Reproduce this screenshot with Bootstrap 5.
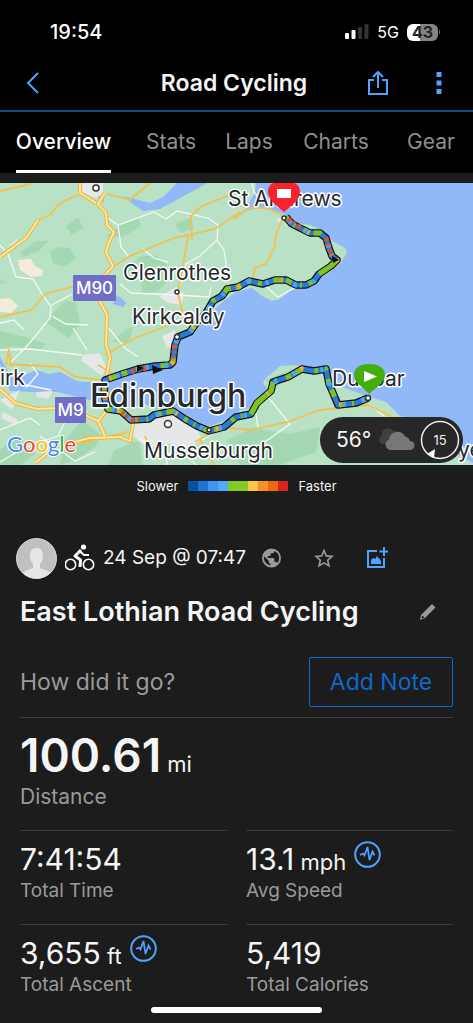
<!DOCTYPE html>
<html lang="en">
<head>
<meta charset="utf-8">
<meta name="viewport" content="width=device-width, initial-scale=1">
<title>Road Cycling</title>
<link href="https://cdn.jsdelivr.net/npm/bootstrap@5.3.0/dist/css/bootstrap.min.css" rel="stylesheet">
<style>
  body { background: #1c1c1c; color: #f5f5f5; font-family: Inter, "Liberation Sans", sans-serif; }
  svg { display: block; flex-shrink: 0; }
  .icon-btn { background: none; border: 0; padding: 0; color: inherit; }
  .muted { color: #9a9a9a; }
  .accent { color: #4da3ff; }
  .topbar { background: #000; }
  .status { height: 56px; padding: 8px 32px 0 50px; font-size: 20px; line-height: 24px; font-weight: 500; color: #fff; }
  .net { font-size: 16px; font-weight: 400; }
  .batt { width: 31px; height: 17px; border-radius: 6px; font-size: 16px; line-height: 17px; font-weight: 700; color: #222; background: linear-gradient(90deg, #fff 43%, #858585 43%); }
  .titlebar { display: grid; grid-template-columns: 1fr auto 1fr; height: 56px; padding: 0 31px 0 26px; border-bottom: 2px solid #0c4d8c; }
  .titlebar h1 { font-size: 23px; line-height: 28px; font-weight: 600; }
  .tabs { display: grid; grid-template-columns: 127fr 88fr 68fr 106fr 84fr; }
  .tabs a { color: #8f8f8f; text-decoration: none; font-size: 21px; line-height: 24px; padding: 18px 0 16px; border-bottom: 3px solid transparent; justify-self: center; white-space: nowrap; }
  .tabs a.active { color: #fff; font-weight: 500; border-color: #fff; }
  .map { margin-top: 10px; }
  .map svg.canvas { width: 100%; height: auto; }
  .weather { right: 10px; bottom: 2px; width: 143px; height: 46px; background: #272727; font-size: 21px; padding: 0 3px 0 16px; }
  .legend { height: 42px; font-size: 13px; line-height: 16px; gap: 10px; }
  .legend i { width: 10px; height: 10px; }
  .meta { height: 42px; margin-top: 30px; padding: 0 16px; }
  .meta time { font-size: 19px; line-height: 24px; margin-right: 16px; }
  .actions { gap: 33px; }
  .gutter { padding: 0 20px; }
  .act-name { font-size: 27px; line-height: 34px; font-weight: 600; }
  .ask { font-size: 23px; line-height: 28px; }
  .note-btn { width: 144px; height: 50px; font-size: 23px; line-height: 28px; color: #1168c9; border: 1px solid #1168c9; border-radius: 2px; padding: 0; }
  .rule { border-top: 1px solid #3f3f3f; margin-top: 10px; }
  .big { font-size: 46px; line-height: 50px; font-weight: 600; }
  .unit { font-size: 22px; line-height: 1; font-weight: 400; }
  .cap-lg { font-size: 21px; line-height: 26px; }
  .stats { display: grid; grid-template-columns: 1fr 1fr; column-gap: 19px; }
  .stat { border-top: 1px solid #3a3a3a; height: 94px; padding-top: 10px; }
  .val { font-size: 30px; line-height: 36px; height: 36px; }
  .cap { font-size: 19px; line-height: 28px; }
  .home { width: 36%; height: 6px; background: #fff; bottom: 10px; left: 32%; }
</style>
</head>
<body>
<header class="topbar">
  <div class="status d-flex align-items-center justify-content-between">
    <span>19:54</span>
    <div class="d-flex align-items-center gap-2">
      <svg width="24" height="16" viewBox="0 0 24 16"><g fill="#fff"><rect y="9" width="4" height="6" rx="1"/><rect x="6.500" y="6" width="4" height="9" rx="1"/></g><g fill="#333"><rect x="13" y="3" width="4" height="12" rx="1"/><rect x="19.500" y="0" width="4" height="15" rx="1"/></g></svg>
      <span class="net">5G</span>
      <span class="d-flex align-items-center"><span class="batt text-center">43</span><svg width="3" height="6" viewBox="0 0 3 6"><path d="M1 0Q3 3 1 6z" fill="#777"/></svg></span>
    </div>
  </div>
  <div class="titlebar align-items-center">
    <button class="icon-btn accent justify-self-start text-start" aria-label="Back"><svg width="14" height="22" viewBox="0 0 14 22" fill="none" stroke="currentColor" stroke-width="2"><path d="M12 1 2 11l10 10"/></svg></button>
    <h1 class="m-0">Road Cycling</h1>
    <div class="d-flex justify-content-end align-items-center">
      <button class="icon-btn accent me-5" aria-label="Share"><svg width="20" height="26" viewBox="0 0 20 26" fill="none" stroke="currentColor" stroke-width="2"><path d="M6 10H1v14h18V10h-5M10 18V2M5 7l5-5 5 5"/></svg></button>
      <button class="icon-btn accent" aria-label="More"><svg width="6" height="24" viewBox="0 0 6 24" fill="currentColor"><path d="M.500 1h5v5h-5zM.500 9.500h5v5h-5zM.500 18h5v5h-5z"/></svg></button>
    </div>
  </div>
  <nav class="tabs">
    <a class="active" href="#overview">Overview</a><a href="#stats">Stats</a><a href="#laps">Laps</a><a href="#charts">Charts</a><a href="#gear">Gear</a>
  </nav>
</header>

<main id="overview">
  <section class="map position-relative">
    <svg class="canvas" viewBox="0 183 473 282" font-family="Inter, sans-serif">
      <defs>
        <path id="route" d="M286 217 292 224 302 229 310 233 320 233 326 238 329 248 332 256 337 260 331 266 319 274 314 281 306 285 296 285 286 280 275 280 263 284 249 281 238 287 227 289 222 296 213 301 206 313 197 322 190 332 178 337 175 345 173 362 170 365 155 366 138 369 122 374 105 380 104 395 108 409 121 411 131 420 149 419 154 415 173 411 185 419 197 426 209 431 224 427 236 417 251 414 257 403 271 391 273 382 288 377 302 369 314 371 326 369 329 384 333 393 338 405 356 403 368 398"/>
        <path id="mway" d="M80 183V193L96 203M105 193 98 204 106 213 107 225 114 232 109 242 106 252 113 266 104 276M99 300 107 315 106 345 110 358 106 380 108 409 98 421 105 436M0 389 15 403 38 409 56 408M85 415 98 421M35 463 55 447 90 438 120 437 130 441 133 424M0 257 26 238 38 220"/>
      </defs>
      <rect y="183" width="473" height="282" fill="#b8e1c5"/>
      <!-- woodland -->
      <g fill="#a3d8b3">
        <path d="M66 226 78 217 83 228 72 235zM20 253 34 242 49 240 40 250 24 257zM50 251 60 247 70 248 76 258 65 267 53 263zM105 237 120 226 138 218 141 226 123 237zM127 271 140 256 155 255 167 266 162 276 168 281 158 291 143 294 140 278zM0 279 8 283 0 284zM45 321 66 300 76 303 80 325 68 338 56 329zM0 331 25 337 47 344 39 350 12 346 0 350zM112 342 125 330 133 327 129 342zM175 224 190 218 194 228 181 233zM65 440 82 420 102 436 95 447 75 460 60 465zM0 450 16 438 35 454 20 465 0 465zM115 450 140 440 142 465 108 465zM227 440 252 428 290 434 320 427 316 452 280 465 240 465zM265 380 285 372 276 390z"/>
      </g>
      <path d="M18 260 31 259 35 266 43 270 42 276 31 277 20 270zM0 299 10 298 18 306 11 313 0 312z" fill="#f4ebd8"/>
      <!-- water -->
      <g fill="#91b9fa">
        <path d="M256 183 255 192 245 211 265 207 284 214 290 222 310 225 326 232 331 240 345 248 347 253 340 264 330 272 318 279 300 288 290 291 280 299 272 301 262 296 252 288 238 291 226 299 218 306 206 320 192 334 180 340 176 362 160 368 140 371 110 382 84 382 77 381 60 372 48 374 37 370 20 377 8 371 0 357 0 364 10 391 33 392 57 392 90 400 110 406 133 407 146 404 155 409 173 408 187 416 207 427 227 420 240 410 253 408 262 396 270 391 263 383 266 378 280 366 293 365 320 369 334 374 336 385 350 390 370 397 386 402 399 415 422 430 444 447 473 463V183z"/>
        <path d="M123 196 134 199 150 203 163 197 177 183H207L193 191 180 198 160 209 143 211 134 205zM115 295 120 297 126 303 123 307 113 304zM94 187l6 10 4 3-1 2-7-7z"/>
      </g>
      <!-- built-up areas -->
      <g fill="#e5e7e9">
        <path d="M80 183H103V193L96 198 83 193zM159 297 176 287 184 294 182 305 168 303zM82 355 100 353 106 367 102 376 82 361zM0 400 20 390 12 410zM36 392 53 391 48 399 37 397zM130 418 173 413 196 427 202 440 190 448 165 443 148 449 132 435zM14 244 18 238 7 247zM276 219 285 218 281 224zM3 412 18 420 16 425 1 418zM162 336 175 330 177 344 167 348z"/>
      </g>
      <!-- minor roads -->
      <g fill="none" stroke="#f4f9f4" stroke-width="1.300">
        <path d="M0 245 8 254 16 277 33 279 42 294 51 307 50 318 28 345 8 365M50 306 72 294M52 316 66 324 88 325M108 218 118 225 154 212 166 219 177 211 208 218 218 225 217 240 200 256 186 264 179 290M118 225 121 247 128 256M143 249 154 258 168 262M217 240 224 250 227 270M120 284 131 293 176 295 209 297 211 287M0 350 30 349 82 355M73 328 87 350M0 323 14 320 24 330M30 363 38 374 26 388M106 325 125 348 138 357M0 430 30 418 40 425M0 462 24 448 58 436 66 420M40 436 75 461 95 452M140 438 160 458 180 448 196 465M165 443 167 465M202 440 232 422 256 414 258 428M268 397 290 424 262 444M252 183 254 192 262 202M264 285 278 297 300 285M369 404 384 416M26 385 51 390"/>
      </g>
      <!-- trunk roads -->
      <g fill="none" stroke="#f2c04d" stroke-width="1.800">
        <path d="M0 191 31 184M80 194 60 203 50 215 38 220 26 238 7 252 0 257M80 194 96 203M107 194 130 200 150 183M111 268 130 256 174 238 215 229 240 212M192 240 191 216 202 206 240 191M188 236 178 294 184 318M0 317 32 310 45 294 75 286M105 355 135 338 175 323M6 364 60 367 75 377 101 380M6 364 9 349 11 367M233 220 248 208 265 208 284 216M282 220 276 235 275 246 266 264 255 268 252 283M211 309 218 296 232 291M195 442 222 427 250 430 288 422 320 410 368 405 399 420M82 443 128 432M200 440 214 465M145 436 151 455M98 365 112 373"/>
      </g>
      <!-- motorways -->
      <use href="#mway" fill="none" stroke="#f0b840" stroke-width="4"/>
      <use href="#mway" fill="none" stroke="#fde9a9" stroke-width="1.800"/>
      <!-- ride, coloured by pace -->
      <g fill="none" stroke-linejoin="round">
        <use href="#route" stroke="#111" stroke-width="7.500"/>
        <use href="#route" stroke="#287bd6" stroke-width="5"/>
        <use href="#route" stroke="#7fc31e" stroke-width="5" stroke-dasharray="4 7 2 9 6 5 8 12"/>
        <use href="#route" stroke="#4da3ff" stroke-width="5" stroke-dasharray="0 5 3 16 4 21"/>
        <path d="M337 260 331 266 319 274M251 414 257 403 271 391 273 382" stroke="#7fc31e" stroke-width="5"/>
        <path d="M326 238 329 248 332 256M288 219 301 228M175 345 173 359M146 368 130 372M104 384 105 402M122 412 131 420 142 419" stroke="#ef4a28" stroke-width="5" stroke-dasharray="3 3 2 4"/>
        <use href="#route" stroke="#f6a83a" stroke-width="5" stroke-dasharray="0 27 2 43 3 35"/>
      </g>
      <path d="M152 365 163 370 153 374zM332 256 339 260 333 263zM137 365 144 368 137 372z" fill="#111"/>
      <g fill="#fff" stroke="#333" stroke-width="1.500"><circle cx="96" cy="188" r="3"/><circle cx="177" cy="292" r="2"/><circle cx="177" cy="337" r="2.500"/><circle cx="284" cy="218" r="2"/><circle cx="168" cy="424" r="3.500"/><circle cx="209" cy="430" r="2"/><circle cx="368" cy="398" r="2.500"/></g>
      <!-- road shields -->
      <rect x="73" y="275" width="43" height="26" rx="1" fill="#706ec6"/><rect x="55" y="397" width="31" height="26" rx="1" fill="#706ec6"/>
      <g fill="#fff" font-size="17" font-weight="500" text-anchor="middle"><text x="94.500" y="294">M90</text><text x="70.500" y="416">M9</text></g>
      <!-- place names -->
      <g fill="#25282b" stroke="#fff" stroke-width="3" stroke-linejoin="round" paint-order="stroke" font-size="21">
        <text x="228" y="206">St Andrews</text><text x="123" y="280">Glenrothes</text><text x="132" y="324">Kirkcaldy</text><text x="0" y="385">irk</text><text x="332" y="386">Dunbar</text><text x="144" y="458">Musselburgh</text><text x="458" y="457">ye</text>
        <text x="90" y="407" font-size="32" font-weight="500">Edinburgh</text>
      </g>
      <text x="7" y="452" font-family="Lato, sans-serif" font-size="22" font-weight="400" stroke="#fff" stroke-width="2" paint-order="stroke"><tspan fill="#4285f4">G</tspan><tspan fill="#ea4335">o</tspan><tspan fill="#fbbc05">o</tspan><tspan fill="#4285f4">g</tspan><tspan fill="#34a853">l</tspan><tspan fill="#ea4335">e</tspan></text>
      <!-- finish and start pins -->
      <path d="M284 212C276 205 268 200 268 192 268 187 271 183 274 183H294C298 184 300 188 300 192 300 200 292 205 284 212z" fill="#f9232b"/><rect x="277" y="189" width="14" height="9" fill="#fff"/>
      <path d="M369 394C362 386 354 383 354 375 354 367 361 364 370 364S385 368 385 375C385 383 376 387 369 394z" fill="#45ae0c"/><path d="M364 371 377 376.500 364 382z" fill="#fff"/>
    </svg>
    <div class="weather position-absolute rounded-pill d-flex align-items-center justify-content-between">
      <span>56°</span>
      <svg width="38" height="24" viewBox="0 0 38 24"><path d="M5 16a5 5 0 0 1 0-9 6 6 0 0 1 11-4 5 5 0 0 1 6 6v7z" fill="#404040"/><path d="M13 22a5.500 5.500 0 0 1-1-10.500A8.500 8.500 0 0 1 28 8.500 6.500 6.500 0 0 1 33 13 4.500 4.500 0 0 1 33 22z" fill="#777"/></svg>
      <svg width="40" height="40" viewBox="0 0 40 40"><circle cx="20" cy="20" r="18.500" fill="none" stroke="#eee" stroke-width="1.500"/><text x="20" y="25" fill="#eee" font-family="Inter, sans-serif" font-size="13" text-anchor="middle">15</text><path d="M15 29 7 34 14 38z" fill="#fff"/></svg>
    </div>
  </section>

  <div class="legend d-flex align-items-center justify-content-center">
    <span>Slower</span>
    <span class="d-flex">
      <i style="background:#0b50a0"></i><i style="background:#1976d8"></i><i style="background:#3c96f5"></i><i style="background:#55a8ff"></i><i style="background:#82cb20"></i><i style="background:#82cb20"></i><i style="background:#fcc54d"></i><i style="background:#fb8d2b"></i><i style="background:#ec6812"></i><i style="background:#d92420"></i>
    </span>
    <span>Faster</span>
  </div>

  <section class="meta d-flex align-items-center">
    <svg width="41" height="41" viewBox="0 0 41 41"><defs><clipPath id="face"><circle cx="20.500" cy="20.500" r="20"/></clipPath></defs><circle cx="20.500" cy="20.500" r="20" fill="#bfc1bf" stroke="#d8d8d8"/><path clip-path="url(#face)" fill="#e6e6e6" d="M20.500 10c5 0 7 4 6.500 9-.500 4-2 6-3 7v4c2 1 8 2 12 6v5H5v-5c4-4 10-5 12-6v-4c-1-1-2.500-3-3-7-.500-5 1.500-9 6.500-9z"/></svg>
    <svg class="mx-2" width="30" height="28" viewBox="0 0 30 28" fill="none" stroke="#fff"><circle cx="5.500" cy="20.500" r="5.200" stroke-width="1.600"/><circle cx="23.500" cy="20.500" r="5.200" stroke-width="1.600"/><circle cx="18.500" cy="3" r="2.600" fill="#fff" stroke="none"/><path d="M16 6 10 12l5.500 4-.500 7" stroke-width="3" stroke-linejoin="round"/><path d="M15 7.500 19 11h5" stroke-width="2.200"/></svg>
    <time>24 Sep @ 07:47</time>
    <div class="actions d-flex align-items-center">
      <button class="icon-btn muted" aria-label="Privacy"><svg width="19" height="20" viewBox="2 2 20 20" fill="currentColor"><path d="M12 2a10 10 0 1 0 0 20 10 10 0 0 0 0-20zm-1 17.930A8 8 0 0 1 4.210 10.210L9 15v1a2 2 0 0 0 2 2zm6.900-2.540A2 2 0 0 0 16 16h-1v-3a1 1 0 0 0-1-1H8v-2h2a1 1 0 0 0 1-1V7h2a2 2 0 0 0 2-2v-.410a8 8 0 0 1 2.900 12.800z"/></svg></button>
      <button class="icon-btn muted" aria-label="Favourite"><svg width="20" height="20" viewBox="2 2 20 19" fill="currentColor"><path d="m22 9.240-7.190-.620L12 2 9.190 8.630 2 9.240l5.460 4.730L5.820 21 12 17.270 18.180 21l-1.630-7.030zM12 15.400l-3.760 2.270 1-4.280-3.320-2.880 4.380-.380L12 6.100l1.710 4.040 4.380.380-3.320 2.880 1 4.280z"/></svg></button>
      <button class="icon-btn accent" aria-label="Add photo"><svg width="21" height="22" viewBox="0 0 21 22"><path d="M10 4H1v16h16v-9M17 0v9M12.500 4.500H21" fill="none" stroke="currentColor" stroke-width="2"/><path d="M4 17v-4l2-2 2 1 2-3 2 3 1-1v2l1 1v3z" fill="currentColor"/></svg></button>
    </div>
  </section>

  <div class="gutter">
    <div class="d-flex align-items-center justify-content-between mt-3 pe-3">
      <h2 class="act-name m-0">East Lothian Road Cycling</h2>
      <button class="icon-btn muted" aria-label="Edit name"><svg width="18" height="18" viewBox="0 0 18 18"><path d="m1 17 1-5L13 1l3.500 3.500L6 15z" fill="currentColor"/><path d="m2.500 15.500.800-3 2.200 2.200z" fill="#1c1c1c"/></svg></button>
    </div>
    <div class="d-flex align-items-center justify-content-between mt-4 pt-1">
      <span class="ask muted">How did it go?</span>
      <button class="btn note-btn">Add Note</button>
    </div>
    <div class="rule pt-2">
      <div class="big mt-1">100.61<span class="unit"> mi</span></div>
      <div class="cap-lg muted mt-1">Distance</div>
    </div>
    <div class="stats mt-3 pt-1">
      <div class="stat"><div class="val">7:41:54</div><div class="cap muted">Total Time</div></div>
      <div class="stat"><div class="val d-flex"><span>13.1<span class="unit"> mph</span></span><svg class="ms-2" width="27" height="27" viewBox="0 0 27 27" fill="none" stroke="#4da3ff"><circle cx="13.500" cy="13.500" r="12.300" stroke-width="2"/><path d="m6 14 3-1.500 1.500 2L13.500 6l2 13 3-8.500 2 4" stroke-width="1.700"/></svg></div><div class="cap muted">Avg Speed</div></div>
      <div class="stat"><div class="val d-flex"><span>3,655<span class="unit"> ft</span></span><svg class="ms-2" width="27" height="27" viewBox="0 0 27 27" fill="none" stroke="#4da3ff"><circle cx="13.500" cy="13.500" r="12.300" stroke-width="2"/><path d="m6 14 3-1.500 1.500 2L13.500 6l2 13 3-8.500 2 4" stroke-width="1.700"/></svg></div><div class="cap muted">Total Ascent</div></div>
      <div class="stat"><div class="val">5,419</div><div class="cap muted">Total Calories</div></div>
    </div>
  </div>
</main>
<div class="home position-fixed rounded-pill"></div>
<script src="https://cdn.jsdelivr.net/npm/bootstrap@5.3.0/dist/js/bootstrap.bundle.min.js"></script>
</body>
</html>
